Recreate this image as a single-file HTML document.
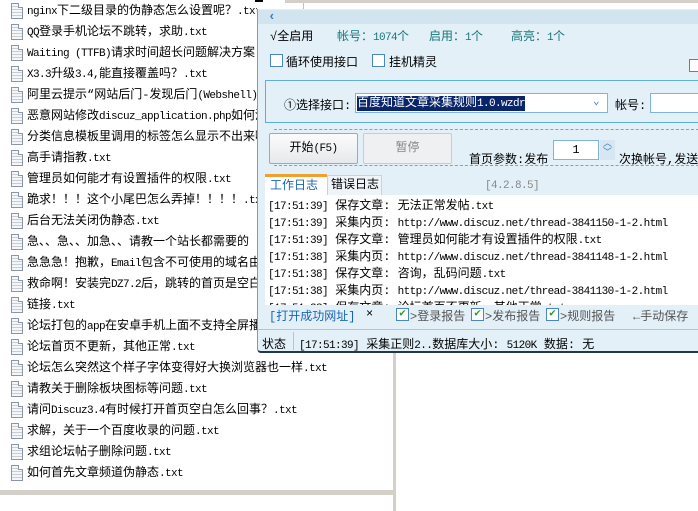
<!DOCTYPE html>
<html><head><meta charset="utf-8"><style>
*{margin:0;padding:0;box-sizing:border-box}
body{width:698px;height:511px;background:#fff;position:relative;overflow:hidden;font-family:"Liberation Mono","WenQuanYi Zen Hei","Noto Sans CJK SC",monospace;font-size:12px;color:#000}
.e{font-size:11px;letter-spacing:-0.6px;font-style:normal;font-weight:normal}
.a{position:absolute;white-space:nowrap}
.list{position:absolute;left:0;top:0;width:393px;height:490px;overflow:hidden}
.li{position:absolute;left:11px;height:16px;white-space:nowrap;line-height:16px}
.ic{position:absolute;left:0;top:0;width:12px;height:16px;border:1px solid #8a96a8;background:repeating-linear-gradient(#f4f6f8 0 2px,#c8ccd4 2px 3px);}
.ic:after{content:"";position:absolute;right:-1px;top:-1px;width:4px;height:4px;background:#fff;border-left:1px solid #8a96a8;border-bottom:1px solid #8a96a8}
.li span{position:absolute;left:16px;top:0}
.win{position:absolute;left:257px;top:9px;width:441px;height:344px;background:#e3f0f8;border-left:1px solid #7a9cbc;border-bottom:2px solid #26364a;border-radius:0 0 0 4px;overflow:hidden}
.cb{position:absolute;width:13px;height:13px;border:1px solid #4a86c0;background:#fff}
.teal{color:#17767a}
</style></head><body>
<div class="list">
<div class="li" style="top:3px"><i class="ic"></i><span><i class="e">nginx</i>下二级目录的伪静态怎么设置呢？<i class="e">.txt</i></span></div>
<div class="li" style="top:24px"><i class="ic"></i><span><i class="e">QQ</i>登录手机论坛不跳转，求助<i class="e">.txt</i></span></div>
<div class="li" style="top:45px"><i class="ic"></i><span><i class="e">Waiting (TTFB)</i>请求时间超长问题解决方案<i class="e">.txt</i></span></div>
<div class="li" style="top:66px"><i class="ic"></i><span><i class="e">X3.3</i>升级<i class="e">3.4,</i>能直接覆盖吗？<i class="e">.txt</i></span></div>
<div class="li" style="top:87px"><i class="ic"></i><span>阿里云提示“网站后门-发现后门<i class="e">(Webshell)</i></span></div>
<div class="li" style="top:108px"><i class="ic"></i><span>恶意网站修改<i class="e">discuz_application.php</i>如何清除</span></div>
<div class="li" style="top:129px"><i class="ic"></i><span>分类信息模板里调用的标签怎么显示不出来啊</span></div>
<div class="li" style="top:150px"><i class="ic"></i><span>高手请指教<i class="e">.txt</i></span></div>
<div class="li" style="top:171px"><i class="ic"></i><span>管理员如何能才有设置插件的权限<i class="e">.txt</i></span></div>
<div class="li" style="top:192px"><i class="ic"></i><span>跪求！！！这个小尾巴怎么弄掉！！！！<i class="e">.txt</i></span></div>
<div class="li" style="top:213px"><i class="ic"></i><span>后台无法关闭伪静态<i class="e">.txt</i></span></div>
<div class="li" style="top:234px"><i class="ic"></i><span>急、、急、、加急、、请教一个站长都需要的</span></div>
<div class="li" style="top:255px"><i class="ic"></i><span>急急急！抱歉，<i class="e">Email</i>包含不可使用的域名由</span></div>
<div class="li" style="top:276px"><i class="ic"></i><span>救命啊！安装完<i class="e">DZ7.2</i>后，跳转的首页是空白</span></div>
<div class="li" style="top:297px"><i class="ic"></i><span>链接<i class="e">.txt</i></span></div>
<div class="li" style="top:318px"><i class="ic"></i><span>论坛打包的<i class="e">app</i>在安卓手机上面不支持全屏播放</span></div>
<div class="li" style="top:339px"><i class="ic"></i><span>论坛首页不更新，其他正常<i class="e">.txt</i></span></div>
<div class="li" style="top:360px"><i class="ic"></i><span>论坛怎么突然这个样子字体变得好大换浏览器也一样<i class="e">.txt</i></span></div>
<div class="li" style="top:381px"><i class="ic"></i><span>请教关于删除板块图标等问题<i class="e">.txt</i></span></div>
<div class="li" style="top:402px"><i class="ic"></i><span>请问<i class="e">Discuz3.4</i>有时候打开首页空白怎么回事？<i class="e">.txt</i></span></div>
<div class="li" style="top:423px"><i class="ic"></i><span>求解，关于一个百度收录的问题<i class="e">.txt</i></span></div>
<div class="li" style="top:444px"><i class="ic"></i><span>求组论坛帖子删除问题<i class="e">.txt</i></span></div>
<div class="li" style="top:465px"><i class="ic"></i><span>如何首先文章频道伪静态<i class="e">.txt</i></span></div>
</div>
<div class="a" style="left:257px;top:0;width:441px;height:9px;background:#fff"></div>
<div class="a" style="left:285px;top:0;width:413px;height:3px;background:#d4d0c8"></div>
<div class="a" style="left:255px;top:0;width:8px;height:2px;background:#000"></div>
<div class="a" style="left:303px;top:3px;width:1px;height:6px;background:#c0c0c0"></div>
<div class="a" style="left:0;top:490px;width:393px;height:5px;background:#d4d0c8"></div>
<div class="a" style="left:393px;top:352px;width:3px;height:159px;background:#d4d0c8"></div>

<div class="win">
 <div class="a" style="left:0;top:1px;width:440px;height:14px;background:#d2e4f0"></div>
 <div class="a" style="left:10px;top:0px;color:#3a7cc0;font-weight:bold;font-size:13px">‹</div>
 <div class="a" style="left:12px;top:18px">√全启用</div>
 <div class="a teal" style="left:79px;top:18px">帐号：<i class="e">1074</i>个</div>
 <div class="a teal" style="left:171px;top:18px">启用：<i class="e">1</i>个</div>
 <div class="a teal" style="left:253px;top:18px">高亮：<i class="e">1</i>个</div>
 <div class="cb" style="left:12px;top:45px"></div><div class="a" style="left:28px;top:44px">循环使用接口</div>
 <div class="cb" style="left:114px;top:45px"></div><div class="a" style="left:131px;top:44px">挂机精灵</div>
 <div class="cb" style="left:431px;top:50px"></div>
 <div class="a" style="left:7px;top:71px;width:434px;height:43px;border:1px solid #5aaee0;border-right:none"></div>
 <div class="a" style="left:26px;top:87px">①选择接口:</div>
 <div class="a" style="left:97px;top:84px;width:253px;height:20px;border:1px solid #7fb4dc;background:#fff"></div>
 <div class="a" style="left:99px;top:87px;background:#0a246a;color:#fff;line-height:14px">百度知道文章采集规则<i class="e">1.0.wzdr</i></div>
 <div class="a" style="left:335px;top:85px;color:#3a7cc0;font-size:11px">⌄</div>
 <div class="a" style="left:357px;top:87px">帐号:</div>
 <div class="a" style="left:392px;top:84px;width:49px;height:20px;border:1px solid #7fb4dc;background:#fff"></div>
 <div class="a" style="left:16px;top:120px;width:425px;border-top:1px dashed #5aaee0"></div>
 <div class="a" style="left:11px;top:124px;width:89px;height:31px;border:1px solid #a0a8b0;border-radius:2px;background:linear-gradient(#fbfbfb,#e6e9ec);text-align:center;line-height:29px">开始<i class="e">(F5)</i></div>
 <div class="a" style="left:105px;top:124px;width:89px;height:31px;border:1px solid #c8ccd0;border-radius:2px;background:#eef0f2;text-align:center;line-height:29px;color:#888">暂停</div>
 <div class="a" style="left:211px;top:141px">首页参数:发布</div>
 <div class="a" style="left:295px;top:131px;width:46px;height:20px;border:1px solid #7fb4dc;background:#fff;text-align:center;line-height:18px">1</div>
 <div class="a" style="left:342px;top:131px;width:15px;height:20px;background:#d6e6f2;color:#3a7cc0;font-size:9px;line-height:9px;text-align:center">︿<br>﹀</div>
 <div class="a" style="left:361px;top:141px">次换帐号,发送</div>
 <div class="a" style="left:16px;top:156px;width:425px;border-top:1px dashed #5aaee0"></div>
 <div class="a" style="left:7px;top:165px;width:62px;height:21px;background:#fff;border-top:3px solid #f0a030;color:#1a64b8;padding-left:5px;line-height:18px">工作日志</div>
 <div class="a" style="left:69px;top:166px;width:55px;height:20px;background:#eef4f8;border:1px solid #c8d4dc;border-bottom:none;padding-left:3px;line-height:18px">错误日志</div>
 <div class="a" style="left:227px;top:169px;color:#888"><i class="e">[4.2.8.5]</i></div>
 <div class="a" style="left:7px;top:186px;width:434px;height:110px;background:#fff;line-height:16px;padding:3px 0 0 3px">
  <div><i class="e">[17:51:39]</i> 保存文章: 无法正常发帖<i class="e">.txt</i></div>
  <div><i class="e">[17:51:39]</i> 采集内页: <i class="e">http://www.discuz.net/thread-3841150-1-2.html</i></div>
  <div><i class="e">[17:51:39]</i> 保存文章: 管理员如何能才有设置插件的权限<i class="e">.txt</i></div>
  <div><i class="e">[17:51:38]</i> 采集内页: <i class="e">http://www.discuz.net/thread-3841148-1-2.html</i></div>
  <div><i class="e">[17:51:38]</i> 保存文章: 咨询，乱码问题<i class="e">.txt</i></div>
  <div><i class="e">[17:51:38]</i> 采集内页: <i class="e">http://www.discuz.net/thread-3841130-1-2.html</i></div>
  <div><i class="e">[17:51:38]</i> 保存文章: 论坛首页不更新，其他正常<i class="e">.txt</i></div>
 </div>
 <div class="a" style="left:7px;top:296px;width:434px;height:18px;background:#e3f0f8"></div>
 <div class="a" style="left:11px;top:298px;color:#1a64b8">[打开成功网址]</div>
 <div class="a" style="left:108px;top:298px">×</div>
 <div class="cb" style="left:138px;top:299px;color:#2a9a2a;font-size:11px;line-height:11px;text-align:center">✔</div><div class="a" style="left:152px;top:298px;color:#555">&gt;登录报告</div>
 <div class="cb" style="left:213px;top:299px;color:#2a9a2a;font-size:11px;line-height:11px;text-align:center">✔</div><div class="a" style="left:227px;top:298px;color:#555">&gt;发布报告</div>
 <div class="cb" style="left:288px;top:299px;color:#2a9a2a;font-size:11px;line-height:11px;text-align:center">✔</div><div class="a" style="left:302px;top:298px;color:#555">&gt;规则报告</div>
 <div class="a" style="left:375px;top:298px;color:#555">←手动保存</div>
 <div class="a" style="left:0;top:320px;width:441px;border-top:1px solid #a8c8e0"></div>
 <div class="a" style="left:4px;top:326px">状态</div>
 <div class="a" style="left:35px;top:323px;width:1px;height:18px;background:#a8c8e0"></div>
 <div class="a" style="left:41px;top:326px"><i class="e">[17:51:39]</i> 采集正则<i class="e">2..</i>数据库大小: <i class="e">5120K</i> 数据: 无</div>
</div>
</body></html>
